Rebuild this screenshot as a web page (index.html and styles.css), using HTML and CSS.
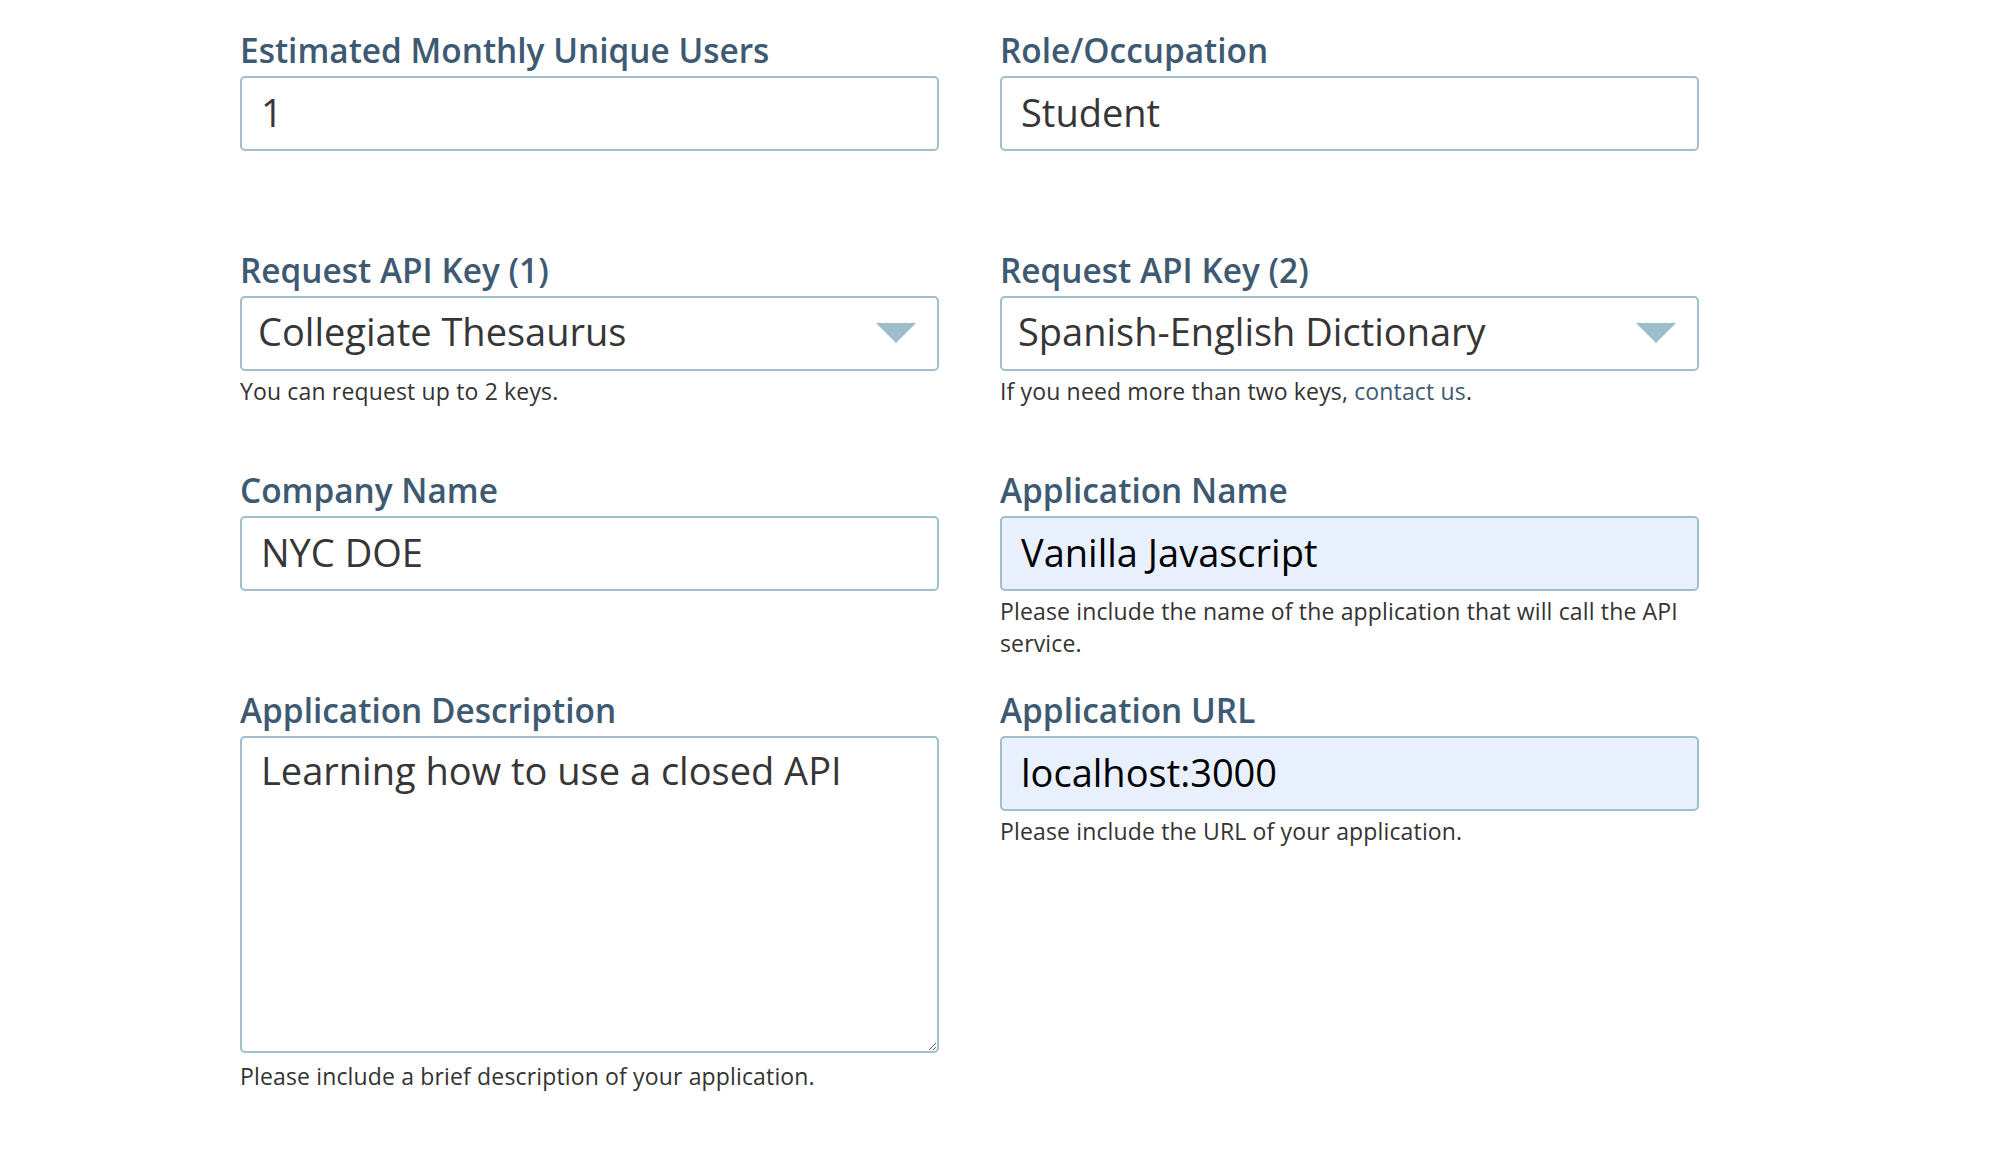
FILE: index.html
```html
<!DOCTYPE html>
<html lang="en">
<head>
<meta charset="utf-8">
<title>Request API Key</title>
<link rel="stylesheet" href="styles.css">
</head>
<body>
<form class="form">
  <div class="field">
    <label class="label" for="users">Estimated Monthly Unique Users</label>
    <input class="input" id="users" type="text" value="1">
  </div>
  <div class="field">
    <label class="label" for="role">Role/Occupation</label>
    <input class="input" id="role" type="text" value="Student">
  </div>

  <div class="field">
    <label class="label" for="key1">Request API Key (1)</label>
    <div class="select-wrap">
      <select class="select" id="key1">
        <option>Collegiate Thesaurus</option>
      </select>
      <svg class="caret" width="40" height="20" viewBox="0 0 40 20"><path d="M0 0H40L20 20Z" fill="#9dbdcb"/></svg>
    </div>
    <p class="hint">You can request up to 2 keys.</p>
  </div>
  <div class="field">
    <label class="label" for="key2">Request API Key (2)</label>
    <div class="select-wrap">
      <select class="select" id="key2">
        <option>Spanish-English Dictionary</option>
      </select>
      <svg class="caret" width="40" height="20" viewBox="0 0 40 20"><path d="M0 0H40L20 20Z" fill="#9dbdcb"/></svg>
    </div>
    <p class="hint">If you need more than two keys, <a class="link" href="#">contact us</a>.</p>
  </div>

  <div class="field">
    <label class="label" for="company">Company Name</label>
    <input class="input" id="company" type="text" value="NYC DOE">
  </div>
  <div class="field">
    <label class="label" for="appname">Application Name</label>
    <input class="input input-filled" id="appname" type="text" value="Vanilla Javascript">
    <p class="hint">Please include the name of the application that will call the API service.</p>
  </div>

  <div class="field">
    <label class="label" for="desc">Application Description</label>
    <textarea class="textarea" id="desc">Learning how to use a closed API</textarea>
    <p class="hint hint-desc">Please include a brief description of your application.</p>
  </div>
  <div class="field">
    <label class="label" for="url">Application URL</label>
    <input class="input input-filled" id="url" type="text" value="localhost:3000">
    <p class="hint">Please include the URL of your application.</p>
  </div>
</form>
</body>
</html>
```

FILE: styles.css
```css
* {
  box-sizing: border-box;
}

html, body {
  margin: 0;
  padding: 0;
  background: #ffffff;
}

body {
  font-family: "Open Sans", "Noto Sans", sans-serif;
  color: #333333;
}

.form {
  display: grid;
  grid-template-columns: 699px 699px;
  grid-template-rows: 220px 220px 220px auto;
  column-gap: 61px;
  margin: 31px 0 0 240px;
  width: 1459px;
}

.field {
  display: flex;
  flex-direction: column;
  align-items: stretch;
}

.label {
  font-size: 33.4px;
  line-height: 38px;
  font-weight: 600;
  color: #3d5a72;
  margin-bottom: 7px;
}

.input,
.select,
.textarea {
  font-family: "Open Sans", "Noto Sans", sans-serif;
  font-size: 38px;
  color: #363636;
  border: 2px solid #9fbfcd;
  border-radius: 5px;
  background: #ffffff;
  outline: none;
  margin: 0;
}

.input {
  height: 75px;
  padding: 0 19px 4px 19px;
}

.input-filled {
  background: #e8f0fe;
  color: #000000;
}

.select-wrap {
  position: relative;
  height: 75px;
}

.select {
  appearance: none;
  -webkit-appearance: none;
  width: 100%;
  height: 75px;
  padding: 0 70px 6px 16px;
}

.caret {
  position: absolute;
  right: 23px;
  top: 27px;
  pointer-events: none;
}

.textarea {
  display: block;
  height: 317px;
  padding: 8px 19px;
  resize: vertical;
  line-height: 48px;
}

.hint {
  margin: 4px 0 0 0;
  font-size: 23px;
  line-height: 32px;
  color: #333333;
  letter-spacing: 0.15px;
}

.hint-desc {
  margin-top: 7px;
}

.link {
  color: #3d5a72;
  text-decoration: none;
}
```
